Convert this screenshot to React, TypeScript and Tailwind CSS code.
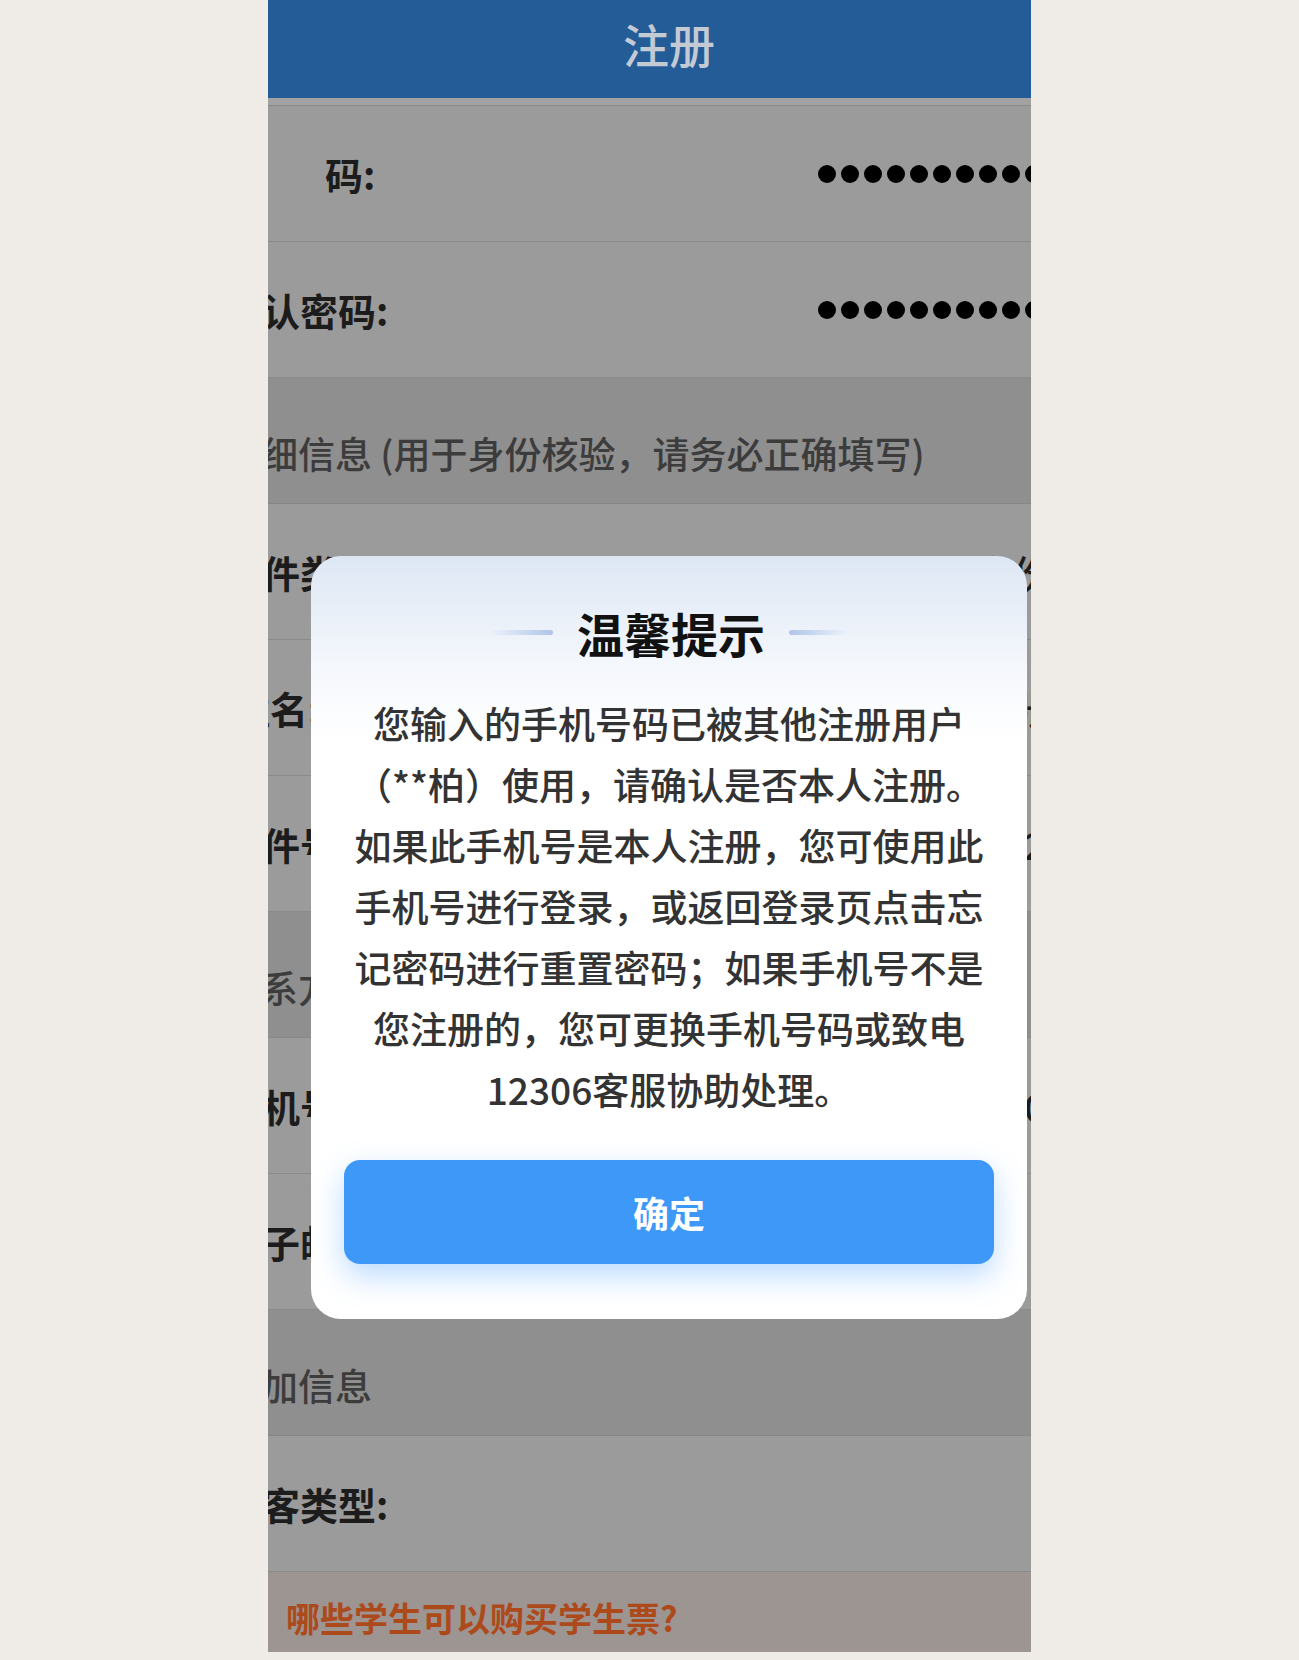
import React from "react";

const font = "font-['Noto_Sans_CJK_SC','Noto_Sans',sans-serif]";

function Dots({ count }: { count: number }) {
  return (
    <div className="flex gap-[5px]">
      {Array.from({ length: count }).map((_, i) => (
        <span key={i} className="h-[18px] w-[18px] rounded-full bg-black" />
      ))}
    </div>
  );
}

function Row({ label, value, dots }: { label: string; value?: string; dots?: boolean }) {
  return (
    <div className="flex h-[136px] items-center justify-between border-b border-[#8a8a8a] bg-[#9b9b9b] pr-[25px]">
      <span className="whitespace-pre text-[38px] font-bold text-[#1c1c1c]">{label}</span>
      {dots ? (
        <Dots count={12} />
      ) : (
        <span className="text-[38px] font-medium text-[#1c1c1c]">{value}</span>
      )}
    </div>
  );
}

function Section({ text }: { text: string }) {
  return (
    <div className="flex h-[126px] items-center border-b border-[#878787] bg-[#8f8f8f] pt-[26px]">
      <span className="whitespace-pre text-[37px] font-medium text-[#3c3c3c]">{text}</span>
    </div>
  );
}

function Dialog() {
  const lines = [
    "您输入的手机号码已被其他注册用户",
    "（**柏）使用，请确认是否本人注册。",
    "如果此手机号是本人注册，您可使用此",
    "手机号进行登录，或返回登录页点击忘",
    "记密码进行重置密码；如果手机号不是",
    "您注册的，您可更换手机号码或致电",
    "12306客服协助处理。",
  ];
  return (
    <div className="absolute left-[43px] top-[556px] flex h-[763px] w-[716px] flex-col items-center rounded-[30px] bg-[linear-gradient(180deg,#dde7f4_0%,#f4f7fc_14%,#ffffff_24%)] pt-[52px]">
      <div className="flex h-[48px] items-center gap-[24px]">
        <span className="h-[5px] w-[64px] rounded-full bg-[linear-gradient(90deg,rgba(184,203,234,0)_0%,#b0c5ea_100%)]" />
        <span className="text-[47px] font-bold leading-none text-[#111]">温馨提示</span>
        <span className="h-[5px] w-[60px] rounded-full bg-[linear-gradient(90deg,#b0c5ea_0%,rgba(184,203,234,0)_100%)]" />
      </div>
      <div className="mt-[37px] flex flex-col items-center text-[37px] font-medium leading-[61px] text-[#333]">
        {lines.map((l) => (
          <span key={l} className="whitespace-nowrap">
            {l}
          </span>
        ))}
      </div>
      <button className="mt-[40px] flex h-[104px] w-[650px] items-center justify-center rounded-[16px] bg-[#3d98f8] text-[36px] font-bold text-white shadow-[0_12px_30px_rgba(61,152,248,0.35)]">
        确定
      </button>
    </div>
  );
}

export default function App() {
  return (
    <div className={`min-h-[1660px] w-full bg-[#efebe6] ${font}`}>
      <div className="relative mx-auto h-[1652px] w-[763px] overflow-hidden">
        <div className="ml-[-44px] flex w-[890px] flex-col">
          <div className="flex h-[98px] items-center justify-center bg-[#245c97] pb-[12px]">
            <span className="text-[46px] font-medium text-[#c3cad4]">注册</span>
          </div>
          <div className="h-[8px] border-b border-[#8a8a8a] bg-[#a2a2a2]" />
          <div className="-ml-[13px]">
            <Row label={"密　　码:"} dots />
          </div>
          <Row label="确认密码:" dots />
          <Section text="详细信息 (用于身份核验，请务必正确填写)" />
          <Row label="证件类型:" value="中国居民身份证" />
          <div className="ml-[8px]">
            <Row label="姓名:" value="张柏" />
          </div>
          <Row label="证件号码:" value="4401**********1234" />
          <Section text="联系方式" />
          <Row label="手机号码:" value="138****0000" />
          <Row label="电子邮箱:" value="" />
          <Section text="附加信息" />
          <Row label="旅客类型:" value="" />
          <div className="flex h-[80px] items-center bg-[#9d9592] pl-[62px] pt-[10px]">
            <span className="text-[34px] font-bold text-[#ad4a1b]">哪些学生可以购买学生票?</span>
          </div>
        </div>
        <Dialog />
      </div>
    </div>
  );
}
